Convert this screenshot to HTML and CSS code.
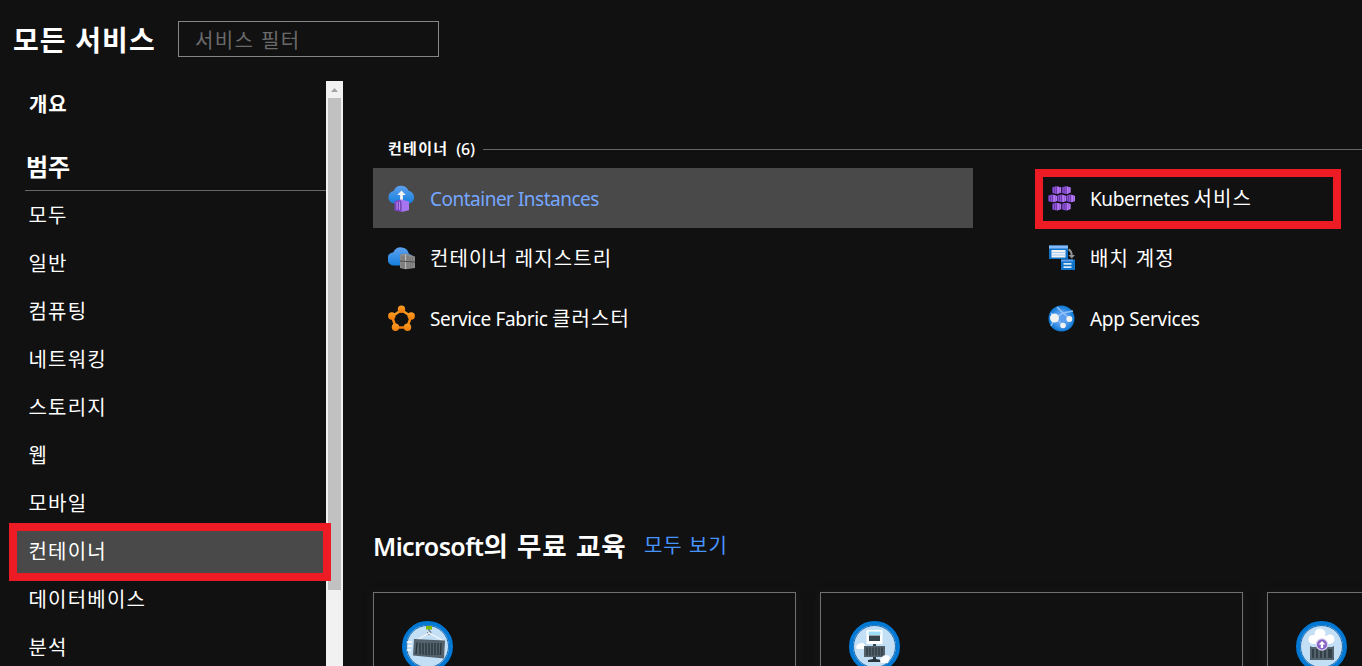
FILE: index.html
```html
<!DOCTYPE html>
<html lang="ko">
<head>
<meta charset="utf-8">
<title>모든 서비스</title>
<link rel="stylesheet" href="styles.css">
</head>
<body>
<svg class="defs" width="0" height="0" aria-hidden="true">
  <defs>
    <linearGradient id="blue" x1="0" y1="0" x2="0" y2="1"><stop offset="0" stop-color="#5ea0ef"/><stop offset="1" stop-color="#1580dc"/></linearGradient>
    <linearGradient id="orange" x1="0" y1="0" x2="0" y2="1"><stop offset="0" stop-color="#fa9d24"/><stop offset="1" stop-color="#f07b09"/></linearGradient>
    <radialGradient id="globe"><stop offset="0" stop-color="#5ea0ef"/><stop offset=".5" stop-color="#559cec"/><stop offset="1" stop-color="#0c78d5"/></radialGradient>
    <g id="pod">
      <path fill="#552f99" d="M0 1.300 4 0v8L0 6.900z"/>
      <path fill="#8f55d3" d="M1 1.500 5 .3 9 1.600v5L5 8 1 6.700z"/>
      <path fill="#6030a0" d="M2.200 1.500h.8v5h-.8zM4.300 1h.9v6.500h-.9z"/>
      <path fill="#b77af4" d="M5.300.4 9 1.600v5L5.300 7.900z"/>
      <path fill="#8a52cf" d="M7 1h.7v6H7z"/>
    </g>
  </defs>
</svg>
<div class="page">
  <header class="top">
    <h1 class="title">모든 서비스</h1>
    <input class="filter" type="text" placeholder="서비스 필터" aria-label="서비스 필터">
  </header>
  <div class="body">
    <nav class="side">
      <a class="overview">개요</a>
      <h2 class="cat">범주</h2>
      <ul class="list">
        <li>모두</li>
        <li>일반</li>
        <li>컴퓨팅</li>
        <li>네트워킹</li>
        <li>스토리지</li>
        <li>웹</li>
        <li>모바일</li>
        <li class="selected">컨테이너</li>
        <li>데이터베이스</li>
        <li>분석</li>
      </ul>
    </nav>
    <div class="scroll">
      <svg class="arrow" width="17" height="17" viewBox="0 0 17 17"><path fill="#a3a3a3" d="M5 11 8.500 7 12 11z"/></svg>
      <div class="thumb"></div>
    </div>
    <main class="main">
      <div class="group"><h3 class="group-name">컨테이너 <span class="count">(6)</span></h3><span class="rule"></span></div>
      <div class="services">
        <div class="service hover">
          <svg class="icon" viewBox="0 0 27 27"><path fill="url(#blue)" d="M6.500 18.500a6.300 6.300 0 0 1-.9-12.500A8 8 0 0 1 20.500 5.800 6.400 6.400 0 0 1 20.500 18.500z"/><path fill="#f2f2f2" d="M13.500 5.500 9.300 10h2.800v6h2.800v-6h2.800z"/><path fill="#7d45c3" d="m6.500 16 7-1.500V27l-7-1.500z"/><path fill="#a875f2" d="m13.500 14.500 7.500 2v8.700L13.500 27z"/><path fill="#b184ea" d="M8.500 17h1.200v7.500H8.500zM11 16.500h1V25h-1z"/></svg>
          <span class="label en container">Container Instances</span>
        </div>
        <div class="service">
          <svg class="icon" viewBox="0 0 27 27"><path fill="url(#blue)" d="M6.500 20.500A6.500 6.500 0 0 1 5.400 7.300a8.200 8.200 0 0 1 15.500 1.400A6 6 0 0 1 20 20.500z"/><path fill="#8a8a8a" d="m12 9.500 5.500-1 9.500 3V23l-9.500 1.200L12 23z"/><path stroke="#b8b8b8" d="M17.500 9v6.500m0 1.500v7"/><path stroke="#666" d="M14 11v4m2-4v4m4-4v5m2.500-4v5m2-5v4M14 18v4m2-4v5m4-5v5m2.500-5v4.500m2-4.500v4" fill="none" stroke-width=".6"/><path d="m12 16 5.500.5 9.500.5" fill="none" stroke="#444" stroke-width="1"/></svg>
          <span class="label">컨테이너 레지스트리</span>
        </div>
        <div class="service">
          <svg class="icon" viewBox="0 0 27 27"><path fill="none" stroke="url(#orange)" stroke-width="2.500" d="m13.500 5 9.500 6.500L19.200 22.500H7.800L4 11.500z"/><g fill="url(#orange)"><circle cx="13.500" cy="4.200" r="3.700"/><circle cx="23.200" cy="11" r="3.700"/><circle cx="19.500" cy="22.300" r="3.700"/><circle cx="7.500" cy="22.300" r="3.700"/><circle cx="3.800" cy="11" r="3.700"/></g></svg>
          <span class="label"><span class="en fabric">Service Fabric </span>클러스터</span>
        </div>
        <div class="service">
          <svg class="icon" viewBox="0 0 27 27"><use href="#pod" x="4" y="1"/><use href="#pod" x="13.500" y="1"/><use href="#pod" x="0" y="9.300"/><use href="#pod" x="9" y="9.300"/><use href="#pod" x="18" y="9.300"/><use href="#pod" x="4" y="17.500"/><use href="#pod" x="13.500" y="17.500"/></svg>
          <span class="label"><span class="en kube">Kubernetes </span>서비스</span>
        </div>
        <div class="service">
          <svg class="icon" viewBox="0 0 27 27"><path fill="#1173c7" d="M1 .5h19V14H1z"/><path fill="#83b9f9" d="M1 .5h19v3H1z"/><path fill="#f2f2f2" d="M3.500 5h14v7.500h-14z"/><path stroke="#8fc0f5" stroke-width=".8" d="M3.500 7.500h14m-14 2.500h14"/><path d="M20.500 4.500c2.500 1 3.300 3.500 3.300 6.500" fill="none" stroke="#949494" stroke-width="2"/><path fill="#949494" d="M20.500 10H27l-3.200 3.500z"/><path fill="#1173c7" d="M13 14.500h14V25H13z"/><path fill="#5ea0ef" d="M13 14.500h12v2H13z"/><path fill="#d5e9fb" d="M15.500 18h8v1.800h-8zm0 3.200h8V23h-8z"/></svg>
          <span class="label">배치 계정</span>
        </div>
        <div class="service">
          <svg class="icon" viewBox="0 0 27 27"><circle cx="13.500" cy="13.500" r="13" fill="url(#globe)"/><path fill="none" stroke="#8fc0f8" stroke-width="1.500" d="m7 13 8-5 10-2M3 8l4 5-4 8M9 2l6 6 7 6M7 13l8 7"/><g fill="#f2f2f2"><circle cx="6.500" cy="13" r="4.500"/><circle cx="21.300" cy="14" r="3"/><circle cx="15" cy="20.500" r="2.800"/></g></svg>
          <span class="label en apps">App Services</span>
        </div>
      </div>
      <div class="training"><h2 class="training-title"><span class="en ms">Microsoft</span>의 무료 교육</h2><a class="all">모두 보기</a></div>
      <div class="cards">
        <article class="card">
          <svg class="badge" viewBox="0 0 51 51"><circle cx="25.500" cy="25.500" r="23.500" fill="#c3dff5" stroke="#0078d4" stroke-width="4"/><circle cx="25.500" cy="25.500" r="21" fill="none" stroke="#1468b0" stroke-width="1"/><path fill="#7fba00" d="M24 5h6v3.500h-6z"/><path fill="none" stroke="#4b5963" d="M27 8v2c3 0 2 3 0 3s-2-1-1-2"/><path fill="none" stroke="#f5f5f5" stroke-width="1.200" d="M13 20 27 12l15 8"/><path fill="#53626c" d="m12 18 31 1.500-1 18-31-3z"/><path stroke="#28343b" stroke-width="1.300" d="M15 21.500 14 33m4-11v11.500m3-11.500v11.500m3-11.500v12m3-12v12m3-12v12m3-12v12m3-12v12m3-12-.5 12"/><path stroke="#fff" stroke-width="1.300" d="M5 21h5m-4 4h4m-5 4h4"/></svg>
        </article>
        <article class="card">
          <svg class="badge" viewBox="0 0 51 51"><circle cx="25.500" cy="25.500" r="23.500" fill="#c3dff5" stroke="#0078d4" stroke-width="4"/><circle cx="25.500" cy="25.500" r="21" fill="none" stroke="#1468b0" stroke-width="1"/><path fill="#fff" d="M8 28a3 3 0 0 1 2-5 4 4 0 0 1 6 1v4z"/><rect x="17.500" y="9" width="16" height="14" rx="1" fill="#fff"/><path fill="#9bddf6" d="M19.500 10.500h12V14h-12z"/><path fill="#34434c" d="M20 14.500h11V20H20zM24 23h3v4h-3z"/><path fill="#53626c" d="M15 25h21v11H15z"/><path stroke="#28343b" stroke-width="1.200" d="M18 26.500v8m3-8v8m3-8v8m3-8v8m3-8v8m3-8v8"/><path fill="#29343b" d="M24 36h3v2l5 1v2H19v-2l5-1z"/><path fill="#fff" d="M32 42a4 4 0 0 1 1-6 5 5 0 0 1 8 0l-2 6z"/></svg>
        </article>
        <article class="card">
          <svg class="badge" viewBox="0 0 51 51"><circle cx="25.500" cy="25.500" r="23.500" fill="#c3dff5" stroke="#0078d4" stroke-width="4"/><circle cx="25.500" cy="25.500" r="21" fill="none" stroke="#1468b0" stroke-width="1"/><g fill="#fff"><circle cx="17" cy="18.500" r="4.500"/><circle cx="24" cy="13" r="5.500"/><circle cx="34" cy="18" r="4.500"/><path d="M16 15h19v8H16z"/></g><path fill="#53626c" d="m14 25 2 1h20l2-1v14H14z"/><path stroke="#28343b" stroke-width="1.500" d="M17 28v9m4-9v9m4-9v9m4-9v9m4-9v9m2-9v9"/><circle cx="26" cy="23.500" r="6.200" fill="#d7cef0"/><circle cx="26" cy="23.500" r="5" fill="#8661c5"/><path fill="#fff" d="m26 20 3.500 3.500h-2.300V27h-2.400v-3.500h-2.300z"/></svg>
        </article>
      </div>
    </main>
  </div>
  <div class="mark mark-category"></div>
  <div class="mark mark-service"></div>
</div>
</body>
</html>
```
FILE: styles.css
```css
* { box-sizing: border-box; }
body { margin: 0; background: #111; color: #fff; font: 20px/24px "Noto Sans CJK KR", sans-serif; overflow: hidden; }
h1, h2, h3, ul { margin: 0; padding: 0; font-weight: 700; }
.defs { display: block; height: 0; }
.page { position: relative; width: 1362px; height: 666px; overflow: hidden; display: flex; flex-direction: column; }
.top { height: 81px; flex: none; display: flex; align-items: flex-start; padding: 21px 0 0 13px; }
.title { width: 165px; font-size: 28px; line-height: 36px; letter-spacing: 1px; white-space: nowrap; }
.filter { width: 261px; height: 36px; padding: 0 16px; border: 1px solid #868686; background: #111; font: 20px/34px "Noto Sans CJK KR", sans-serif; letter-spacing: 1.300px; color: #fff; }
.filter::placeholder { color: #6a6a6a; opacity: 1; }
.body { flex: 1; min-height: 0; display: flex; }
.side { width: 326px; flex: none; overflow: hidden; }
.overview { display: block; padding: 11px 0 1px 29px; font-weight: 700; font-size: 20px; letter-spacing: .8px; }
.cat { margin: 30px 0 0 25px; padding-left: 1px; height: 44px; font-size: 24px; line-height: 37px; border-bottom: 1px solid #666; }
.list { list-style: none; font-weight: 400; }
.list li { height: 48px; line-height: 47px; padding-left: 28.500px; letter-spacing: 1.200px; }
.list .selected { background: #494949; margin-left: 10px; padding-left: 18.500px; }
.scroll { width: 17px; flex: none; background: #f1f1f1; display: flex; flex-direction: column; align-items: center; }
.arrow { display: block; }
.thumb { width: 13px; height: 492px; background: #c1c1c1; }
.main { flex: 1; min-width: 0; padding: 56px 0 0 30px; overflow: hidden; }
.group { display: flex; align-items: center; height: 25px; padding-left: 15px; }
.group-name { display: flex; justify-content: space-between; font-size: 15px; line-height: 22px; letter-spacing: 1.300px; width: 87px; margin-right: 8px; white-space: nowrap; }
.count { font: 500 16px/25px "Noto Sans", sans-serif; letter-spacing: -.1px; }
.rule { flex: 1; height: 1px; background: #666; }
.services { display: grid; grid-template: repeat(3, 60px) / 600px 600px; grid-auto-flow: column; column-gap: 60px; margin-top: 6px; }
.service { display: flex; align-items: center; padding-left: 15px; gap: 15px; }
.hover { background: #494949; color: #75a7ff; }
.icon { width: 27px; height: 27px; flex: none; }
.label { white-space: nowrap; letter-spacing: 1.100px; }
.en { font-family: "Noto Sans", sans-serif; font-size: 19px; letter-spacing: -.5px; }
.container, .apps { padding-top: 2px; }
.apps { letter-spacing: -.27px; }
.fabric { letter-spacing: -.35px; }
.kube { letter-spacing: -.4px; }
.training { display: flex; align-items: center; height: 40px; margin-top: 178px; }
.training-title { width: 271px; font-size: 26.500px; line-height: 38px; padding-bottom: 1px; letter-spacing: .9px; white-space: nowrap; }
.ms { font-size: 25px; font-weight: 600; letter-spacing: -.6px; }
.all { color: #4894fe; letter-spacing: .9px; padding-bottom: 3px; }
.cards { display: flex; gap: 24px; margin-top: 26px; width: 1320px; }
.card { width: 423px; height: 200px; flex: none; border: 1px solid #707070; padding: 28px; box-shadow: 0 2px 8px #1c1c1c; }
.badge { width: 51px; height: 51px; display: block; }
.mark { position: absolute; border: 8px solid #ed1c24; }
.mark-category { left: 9px; top: 523px; width: 322px; height: 58px; }
.mark-service { left: 1035px; top: 169px; width: 306px; height: 60px; }
```
